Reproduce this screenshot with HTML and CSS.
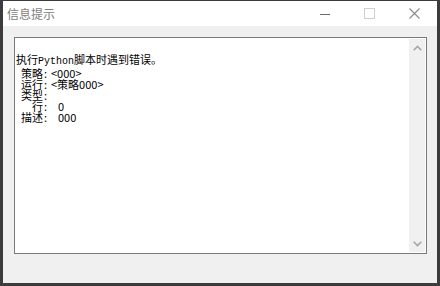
FILE: index.html
```html
<html>
 <head>
 <meta charset="utf-8">
 <link rel="stylesheet" href="styles.css">
 </head>
 <body>
 <div class="window">
  <div class="titlebar">
   <span class="title">信息提示</span>
   <div class="controls">
    <div class="cbtn"><svg width="10" height="10" viewBox="0 0 10 10"><path d="M0 5.5H10" stroke="#6b6b6b" stroke-width="1"/></svg></div>
    <div class="cbtn"><svg width="11" height="11" viewBox="0 0 11 11"><rect x="0.5" y="0.5" width="10" height="10" fill="none" stroke="#cfcfcf" stroke-width="1"/></svg></div>
    <div class="cbtn"><svg width="11" height="11" viewBox="0 0 11 11"><path d="M0.5 0.5L10.5 10.5M10.5 0.5L0.5 10.5" stroke="#8a8a8a" stroke-width="1.1"/></svg></div>
   </div>
  </div>
  <div class="client">
   <div class="textbox">
    <div class="text">
     <div class="ln first">执行<span class="lat">Python</span>脚本时遇到错误。</div>
     <div class="row"><span class="k">策略</span><span class="c">:</span><span class="v">&lt;000&gt;</span></div>
     <div class="row"><span class="k">运行</span><span class="c">:</span><span class="v">&lt;策略000&gt;</span></div>
     <div class="row"><span class="k">类型</span><span class="c">:</span><span class="v"></span></div>
     <div class="row"><span class="k">行</span><span class="c">:</span><span class="v far">0</span></div>
     <div class="row"><span class="k">描述</span><span class="c">:</span><span class="v far">000</span></div>
    </div>
    <div class="scrollbar">
     <div class="arrow"><svg width="9" height="6" viewBox="0 0 9 6"><path d="M0.7 5.3L4.5 1.5L8.3 5.3" fill="none" stroke="#a6a6a6" stroke-width="1.6"/></svg></div>
     <div class="arrow"><svg width="9" height="6" viewBox="0 0 9 6"><path d="M0.7 0.7L4.5 4.5L8.3 0.7" fill="none" stroke="#a6a6a6" stroke-width="1.6"/></svg></div>
    </div>
   </div>
  </div>
 </div>
 </body>
</html>
```

FILE: styles.css
```css
body{
  margin: 0;
  padding: 0;
  background-color: #3c3c3c;
  font-family: "Noto Sans CJK SC", "Noto Sans", sans-serif;
}
.window{
  margin: 1px 3px 3px 3px;
  height: 282px;
  display: flex;
  flex-direction: column;
}
.titlebar{
  height: 25px;
  background-color: #fff;
  display: flex;
  align-items: center;
}
.title{
  margin-left: 4px;
  font-size: 12px;
  line-height: 25px;
  color: #7d7d7d;
}
.controls{
  margin-left: auto;
  display: flex;
  height: 100%;
}
.cbtn{
  width: 45px;
  display: flex;
  align-items: center;
  justify-content: center;
}
.client{
  flex: 1;
  background-color: #f0f0f0;
  padding: 11px 10px 29px 11px;
  display: flex;
}
.textbox{
  flex: 1;
  border: 1px solid #7a7a7a;
  background-color: #fff;
  padding: 1px;
  display: flex;
}
.text{
  flex: 1;
  padding: 14px 0 0 0;
  font-size: 11px;
  line-height: 11px;
  color: #000;
}
.ln.first{
  line-height: 12px;
}
.lat{
  font-family: "Liberation Mono", monospace;
  font-size: 10px;
}
.row{
  display: grid;
  grid-template-columns: 27px 5px auto;
}
.k{
  text-align: right;
}
.c{
  padding-left: 1px;
}
.v{
  padding-left: 3px;
}
.v.far{
  padding-left: 10px;
}
.scrollbar{
  width: 16px;
  background-color: #f0f0f0;
  display: flex;
  flex-direction: column;
  justify-content: space-between;
}
.arrow{
  height: 17px;
  display: flex;
  align-items: center;
  justify-content: center;
}
```
